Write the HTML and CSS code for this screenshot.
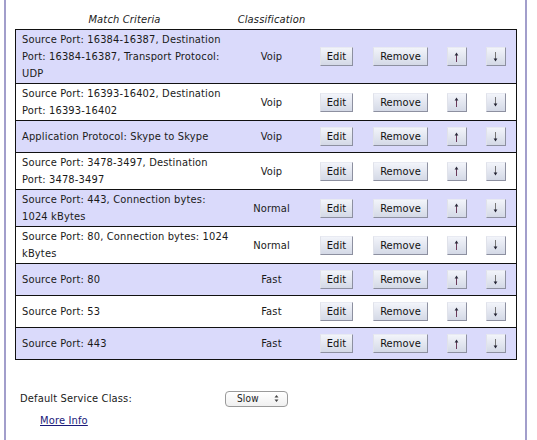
FILE: index.html
```html
<!DOCTYPE html>
<html>
<head>
<meta charset="utf-8">
<link rel="stylesheet" href="styles.css">
</head>
<body>
<div class="panel">
  <table class="rules">
    <colgroup>
      <col class="c-crit"><col class="c-class"><col class="c-edit"><col class="c-rem"><col class="c-up"><col class="c-down">
    </colgroup>
    <thead>
      <tr><th>Match Criteria</th><th>Classification</th><th></th><th></th><th></th><th></th></tr>
    </thead>
    <tbody>
      <tr class="alt"><td class="crit">Source Port: 16384-16387, Destination Port: 16384-16387, Transport Protocol: UDP</td><td class="cls">Voip</td><td><button class="btn">Edit</button></td><td><button class="btn">Remove</button></td><td><button class="btn arr"><svg class="up" width="5" height="10" viewBox="0 0 5 10"><path d="M2.5 2.5V10" stroke="#6a3a5a" stroke-width="1"/><path d="M0.6 3.4L2.5 0.6 4.4 3.4Z" fill="#2a2a3a"/></svg></button></td><td><button class="btn arr"><svg width="5" height="10" viewBox="0 0 5 10"><path d="M2.5 0V7.5" stroke="#777" stroke-width="1"/><path d="M0.6 6.6L2.5 9.4 4.4 6.6Z" fill="#223"/></svg></button></td></tr>
      <tr><td class="crit">Source Port: 16393-16402, Destination Port: 16393-16402</td><td class="cls">Voip</td><td><button class="btn">Edit</button></td><td><button class="btn">Remove</button></td><td><button class="btn arr"><svg width="5" height="10" viewBox="0 0 5 10"><path d="M2.5 2.5V10" stroke="#6a3a5a" stroke-width="1"/><path d="M0.6 3.4L2.5 0.6 4.4 3.4Z" fill="#2a2a3a"/></svg></button></td><td><button class="btn arr"><svg width="5" height="10" viewBox="0 0 5 10"><path d="M2.5 0V7.5" stroke="#777" stroke-width="1"/><path d="M0.6 6.6L2.5 9.4 4.4 6.6Z" fill="#223"/></svg></button></td></tr>
      <tr class="alt"><td class="crit">Application Protocol: Skype to Skype</td><td class="cls">Voip</td><td><button class="btn">Edit</button></td><td><button class="btn">Remove</button></td><td><button class="btn arr"><svg width="5" height="10" viewBox="0 0 5 10"><path d="M2.5 2.5V10" stroke="#6a3a5a" stroke-width="1"/><path d="M0.6 3.4L2.5 0.6 4.4 3.4Z" fill="#2a2a3a"/></svg></button></td><td><button class="btn arr"><svg width="5" height="10" viewBox="0 0 5 10"><path d="M2.5 0V7.5" stroke="#777" stroke-width="1"/><path d="M0.6 6.6L2.5 9.4 4.4 6.6Z" fill="#223"/></svg></button></td></tr>
      <tr><td class="crit">Source Port: 3478-3497, Destination Port: 3478-3497</td><td class="cls">Voip</td><td><button class="btn">Edit</button></td><td><button class="btn">Remove</button></td><td><button class="btn arr"><svg width="5" height="10" viewBox="0 0 5 10"><path d="M2.5 2.5V10" stroke="#6a3a5a" stroke-width="1"/><path d="M0.6 3.4L2.5 0.6 4.4 3.4Z" fill="#2a2a3a"/></svg></button></td><td><button class="btn arr"><svg width="5" height="10" viewBox="0 0 5 10"><path d="M2.5 0V7.5" stroke="#777" stroke-width="1"/><path d="M0.6 6.6L2.5 9.4 4.4 6.6Z" fill="#223"/></svg></button></td></tr>
      <tr class="alt"><td class="crit">Source Port: 443, Connection bytes: 1024 kBytes</td><td class="cls">Normal</td><td><button class="btn">Edit</button></td><td><button class="btn">Remove</button></td><td><button class="btn arr"><svg width="5" height="10" viewBox="0 0 5 10"><path d="M2.5 2.5V10" stroke="#6a3a5a" stroke-width="1"/><path d="M0.6 3.4L2.5 0.6 4.4 3.4Z" fill="#2a2a3a"/></svg></button></td><td><button class="btn arr"><svg width="5" height="10" viewBox="0 0 5 10"><path d="M2.5 0V7.5" stroke="#777" stroke-width="1"/><path d="M0.6 6.6L2.5 9.4 4.4 6.6Z" fill="#223"/></svg></button></td></tr>
      <tr><td class="crit">Source Port: 80, Connection bytes: 1024 kBytes</td><td class="cls">Normal</td><td><button class="btn">Edit</button></td><td><button class="btn">Remove</button></td><td><button class="btn arr"><svg width="5" height="10" viewBox="0 0 5 10"><path d="M2.5 2.5V10" stroke="#6a3a5a" stroke-width="1"/><path d="M0.6 3.4L2.5 0.6 4.4 3.4Z" fill="#2a2a3a"/></svg></button></td><td><button class="btn arr"><svg width="5" height="10" viewBox="0 0 5 10"><path d="M2.5 0V7.5" stroke="#777" stroke-width="1"/><path d="M0.6 6.6L2.5 9.4 4.4 6.6Z" fill="#223"/></svg></button></td></tr>
      <tr class="alt"><td class="crit">Source Port: 80</td><td class="cls">Fast</td><td><button class="btn">Edit</button></td><td><button class="btn">Remove</button></td><td><button class="btn arr"><svg width="5" height="10" viewBox="0 0 5 10"><path d="M2.5 2.5V10" stroke="#6a3a5a" stroke-width="1"/><path d="M0.6 3.4L2.5 0.6 4.4 3.4Z" fill="#2a2a3a"/></svg></button></td><td><button class="btn arr"><svg width="5" height="10" viewBox="0 0 5 10"><path d="M2.5 0V7.5" stroke="#777" stroke-width="1"/><path d="M0.6 6.6L2.5 9.4 4.4 6.6Z" fill="#223"/></svg></button></td></tr>
      <tr><td class="crit">Source Port: 53</td><td class="cls">Fast</td><td><button class="btn">Edit</button></td><td><button class="btn">Remove</button></td><td><button class="btn arr"><svg width="5" height="10" viewBox="0 0 5 10"><path d="M2.5 2.5V10" stroke="#6a3a5a" stroke-width="1"/><path d="M0.6 3.4L2.5 0.6 4.4 3.4Z" fill="#2a2a3a"/></svg></button></td><td><button class="btn arr"><svg width="5" height="10" viewBox="0 0 5 10"><path d="M2.5 0V7.5" stroke="#777" stroke-width="1"/><path d="M0.6 6.6L2.5 9.4 4.4 6.6Z" fill="#223"/></svg></button></td></tr>
      <tr class="alt"><td class="crit">Source Port: 443</td><td class="cls">Fast</td><td><button class="btn">Edit</button></td><td><button class="btn">Remove</button></td><td><button class="btn arr"><svg width="5" height="10" viewBox="0 0 5 10"><path d="M2.5 2.5V10" stroke="#6a3a5a" stroke-width="1"/><path d="M0.6 3.4L2.5 0.6 4.4 3.4Z" fill="#2a2a3a"/></svg></button></td><td><button class="btn arr"><svg width="5" height="10" viewBox="0 0 5 10"><path d="M2.5 0V7.5" stroke="#777" stroke-width="1"/><path d="M0.6 6.6L2.5 9.4 4.4 6.6Z" fill="#223"/></svg></button></td></tr>
    </tbody>
  </table>

  <div class="default-row">
    <span class="label">Default Service Class:</span>
    <div class="select"><span class="sel-text">Slow</span><svg width="5" height="9" viewBox="0 0 5 9"><path d="M0.5 3.5L2.5 1 4.5 3.5Z M0.5 5.5L2.5 8 4.5 5.5Z" fill="#444"/></svg></div>
  </div>
  <a class="more" href="#">More Info</a>
</div>
</body>
</html>
```

FILE: styles.css
```css
html, body {
  margin: 0;
  padding: 0;
  background: #fff;
}
body {
  font-family: "DejaVu Sans Condensed", "DejaVu Sans", sans-serif;
  font-stretch: condensed;
  font-size: 11px;
  line-height: 17px;
  letter-spacing: 0.16px;
  color: #1a1a1a;
}
.panel {
  margin-left: 4px;
  min-height: 440px;
  box-sizing: border-box;
  width: 523px;
  border-left: 2px solid #a29ecb;
  border-right: 2px solid #a29ecb;
  padding: 11px 0 0 9px;
}
.rules {
  border-collapse: collapse;
  table-layout: fixed;
  width: 501px;
}
.c-crit { width: 218px; }
.c-class { width: 76px; }
.c-edit { width: 54px; }
.c-rem { width: 74px; }
.c-up { width: 38px; }
.c-down { width: 41px; }
.rules th {
  font-style: italic;
  font-weight: normal;
  text-align: center;
  padding: 0 0 1px;
  height: 17px;
}
.rules tbody {
  border: 1px solid #111;
}
.rules td {
  border-top: 1px solid #111;
  padding: 1px 5px;
  vertical-align: middle;
  text-align: center;
}
.rules td.crit {
  text-align: left;
  padding-left: 6px;
  padding-right: 4px;
}
.rules tr.alt td {
  background: #dadafb;
}
.btn {
  display: block;
  margin: 5px auto;
  height: 19px;
  padding: 0 6px;
  font: inherit;
  letter-spacing: 0.1px;
  line-height: 17px;
  color: #111;
  background: linear-gradient(#f2f4fa, #d4d9e6);
  border: 1px solid;
  border-color: #e8eaf2 #8d90a0 #8d90a0 #e0e2ea;
  border-radius: 0;
}
.btn.arr {
  width: 20px;
  padding: 0;
  display: flex;
  align-items: center;
  justify-content: center;
}
.default-row {
  display: grid;
  grid-template-columns: 205px auto;
  align-items: center;
  margin-top: 30px;
  padding-left: 5px;
}
.select {
  width: 63px;
  height: 16px;
  box-sizing: border-box;
  border: 1px solid #9a9a9a;
  border-radius: 4px;
  background: linear-gradient(#ffffff, #f0f0f0);
  display: flex;
  align-items: center;
  justify-content: space-between;
  padding: 0 8px 0 11px;
  font-size: 10px;
}
.more {
  display: inline-block;
  margin: 5px 0 0 25px;
  color: #1a1a7a;
  text-decoration: underline;
}
```
